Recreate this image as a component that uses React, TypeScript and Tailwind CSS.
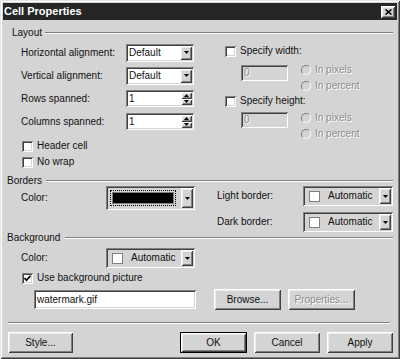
const sunken =
	"shadow-[inset_1px_1px_0_#808080,inset_-1px_-1px_0_#ffffff,inset_2px_2px_0_#404040,inset_-2px_-2px_0_#d4d4d4]";
const raised =
	"shadow-[inset_1px_1px_0_#ffffff,inset_-1px_-1px_0_#404040,inset_2px_2px_0_#ececec,inset_-2px_-2px_0_#808080]";
const grayText = "text-[#8c8c8c] [text-shadow:1px_1px_0_#ffffff]";

const Arrow = ({ up }: { up?: boolean }) => (
	<svg width="5" height="3" viewBox="0 0 5 3">
		<path d={up ? "M2.5 0L5 3H0z" : "M0 0h5L2.5 3z"} fill="#000" />
	</svg>
);

const DropBtn = () => (
	<div
		className={`w-[12px] h-full shrink-0 flex items-center justify-center bg-[#d4d4d4] ${raised}`}
	>
		<Arrow />
	</div>
);

const Select = ({ value }: { value: string }) => (
	<div className={`w-[68px] h-[18px] bg-white p-[2px] flex ${sunken}`}>
		<div className="flex-1 pl-[1px] flex items-center">{value}</div>
		<DropBtn />
	</div>
);

const Spin = ({ value }: { value: string }) => (
	<div className={`w-[68px] h-[17px] bg-white p-[2px] flex ${sunken}`}>
		<div className="flex-1 pl-[1px] flex items-center">{value}</div>
		<div className="w-[11px] flex flex-col">
			<div className={`flex-1 flex items-center justify-center bg-[#d4d4d4] ${raised}`}>
				<Arrow up />
			</div>
			<div className={`flex-1 flex items-center justify-center bg-[#d4d4d4] ${raised}`}>
				<Arrow />
			</div>
		</div>
	</div>
);

const AutoSelect = ({ w }: { w: string }) => (
	<div className={`${w} h-[20px] bg-[#d4d4d4] p-[2px] flex ${sunken}`}>
		<div className="flex-1 flex items-center">
			<div className="ml-[4px] w-[11px] h-[11px] bg-white border border-[#808080]" />
			<span className="ml-[8px]">Automatic</span>
		</div>
		<DropBtn />
	</div>
);

const ColorSelect = () => (
	<div className={`w-[89px] h-[24px] bg-[#d4d4d4] p-[2px] flex ${sunken}`}>
		<div className="flex-1 p-[2px] flex">
			<div className="flex-1 border border-dotted border-black p-[1px] flex">
				<div className="flex-1 bg-black border border-[#808080]" />
			</div>
		</div>
		<div className="w-[3px]" />
		<DropBtn />
	</div>
);

const Check = ({ label, checked }: { label: string; checked?: boolean }) => (
	<div className="flex items-center h-full">
		<div
			className={`w-[11px] h-[11px] bg-white flex items-center justify-center ${sunken}`}
		>
			{checked && (
				<svg width="7" height="7" viewBox="0 0 7 7">
					<path d="M0.5 3l2 2.2L6.5 0.8" stroke="#000" strokeWidth="1.6" fill="none" />
				</svg>
			)}
		</div>
		<span className="ml-[4px]">{label}</span>
	</div>
);

const Radio = ({ label }: { label: string }) => (
	<div className="h-[16px] flex items-center">
		<div className="w-[10px] h-[10px] rounded-full border border-t-[#808080] border-l-[#808080] border-r-white border-b-white bg-[#d4d4d4]" />
		<span className={`ml-[4px] ${grayText}`}>{label}</span>
	</div>
);

const Btn = ({
	label,
	w,
	disabled,
	def,
}: {
	label: string;
	w: string;
	disabled?: boolean;
	def?: boolean;
}) => (
	<div
		className={`${w} h-full flex items-center justify-center bg-[#d4d4d4] ${raised} ${
			def ? "border border-black" : ""
		} ${disabled ? grayText : ""}`}
	>
		{label}
	</div>
);

const Group = ({ label, ml, gap, h }: { label: string; ml: string; gap: string; h: string }) => (
	<div className={`flex items-center ${h}`}>
		<span className={ml}>{label}</span>
		<div className={`flex-1 ${gap} h-[2px] border-t border-t-[#808080] border-b border-b-white`} />
	</div>
);

export default function App() {
	return (
		<div
			className={`w-[400px] h-[359px] bg-[#d4d4d4] text-[10px] leading-none text-[#111] font-['Liberation_Sans',Arial,sans-serif] pt-[3px] shadow-[inset_1px_1px_0_#e4e4e4,inset_-1px_-1px_0_#404040,inset_2px_2px_0_#ffffff,inset_-2px_-2px_0_#808080]`}
		>
			{/* title bar */}
			<div className="mx-[3px] h-[17px] bg-[#262626] flex items-center justify-between">
				<span className="pl-[1px] text-white font-bold text-[11px]">Cell Properties</span>
				<div
					className={`mr-[2px] w-[14px] h-[12px] bg-[#d4d4d4] flex items-center justify-center ${raised}`}
				>
					<svg width="7" height="6" viewBox="0 0 7 6">
						<path d="M0.5 0.5l6 5M6.5 0.5l-6 5" stroke="#000" strokeWidth="1.6" />
					</svg>
				</div>
			</div>

			<div className="pl-[5px] pr-[7px]">
				<Group label="Layout" ml="ml-[7px]" gap="ml-[3px]" h="mt-[6px] h-[14px]" />
				<div className="flex">
					<div className="ml-[16px] w-[173px] mt-[1px]">
						{[
							["Horizontal alignment:", <Select value="Default" />],
							["Vertical alignment:", <Select value="Default" />],
							["Rows spanned:", <Spin value="1" />],
							["Columns spanned:", <Spin value="1" />],
						].map(([l, c], i) => (
							<div key={i} className="h-[23px] flex items-center justify-between">
								<span>{l}</span>
								{c}
							</div>
						))}
						<div className="mt-[5px] ml-[1px] h-[16px]">
							<Check label="Header cell" />
						</div>
						<div className="ml-[1px] h-[16px]">
							<Check label="No wrap" />
						</div>
					</div>
					<div className="ml-[31px]">
						<div className="mt-[4px] h-[14px]">
							<Check label="Specify width:" />
						</div>
						<div className="mt-[4px] h-[32px] flex">
							<div
								className={`mt-[3px] ml-[16px] w-[47px] h-[16px] pl-[3px] flex items-center ${sunken} ${grayText}`}
							>
								0
							</div>
							<div className="ml-[13px]">
								<Radio label="In pixels" />
								<Radio label="In percent" />
							</div>
						</div>
						<div className="h-[14px]">
							<Check label="Specify height:" />
						</div>
						<div className="mt-[2px] h-[32px] flex">
							<div
								className={`mt-[2px] ml-[16px] w-[47px] h-[16px] pl-[3px] flex items-center ${sunken} ${grayText}`}
							>
								0
							</div>
							<div className="ml-[13px]">
								<Radio label="In pixels" />
								<Radio label="In percent" />
							</div>
						</div>
					</div>
				</div>

				<Group label="Borders" ml="ml-[2px]" gap="ml-[4px]" h="mt-[6px] h-[10px]" />
				<div className="flex">
					<div className="ml-[16px] w-[174px] h-[24px] flex items-center">
						<span className="w-[85px]">Color:</span>
						<ColorSelect />
					</div>
					<div className="ml-[22px]">
						<div className="h-[20px] flex items-center">
							<span className="w-[86px]">Light border:</span>
							<AutoSelect w="w-[90px]" />
						</div>
						<div className="mt-[6px] h-[20px] flex items-center">
							<span className="w-[86px]">Dark border:</span>
							<AutoSelect w="w-[90px]" />
						</div>
					</div>
				</div>

				<Group label="Background" ml="ml-[2px]" gap="ml-[5px]" h="h-[12px]" />
				<div className="mt-[4px] ml-[16px] h-[20px] flex items-center">
					<span className="w-[85px]">Color:</span>
					<AutoSelect w="w-[89px]" />
				</div>
				<div className="mt-[3px] ml-[17px] h-[14px]">
					<Check label="Use background picture" checked />
				</div>
				<div className="mt-[4px] h-[21px] flex items-center">
					<div
						className={`ml-[29px] w-[162px] h-[19px] bg-white pl-[3px] flex items-center ${sunken}`}
					>
						watermark.gif
					</div>
					<div className="ml-[18px] h-full">
						<Btn label="Browse..." w="w-[67px]" />
					</div>
					<div className="ml-[7px] h-full">
						<Btn label="Properties..." w="w-[67px]" disabled />
					</div>
				</div>

				<div className="mt-[12px] mx-[3px] h-[2px] border-t border-t-[#808080] border-b border-b-white" />

				<div className="mt-[8px] h-[21px] flex">
					<div className="ml-[3px]">
						<Btn label="Style..." w="w-[65px]" />
					</div>
					<div className="flex-1" />
					<Btn label="OK" w="w-[67px]" def />
					<div className="ml-[7px]">
						<Btn label="Cancel" w="w-[66px]" />
					</div>
					<div className="ml-[7px]">
						<Btn label="Apply" w="w-[66px]" />
					</div>
				</div>
			</div>
		</div>
	);
}
